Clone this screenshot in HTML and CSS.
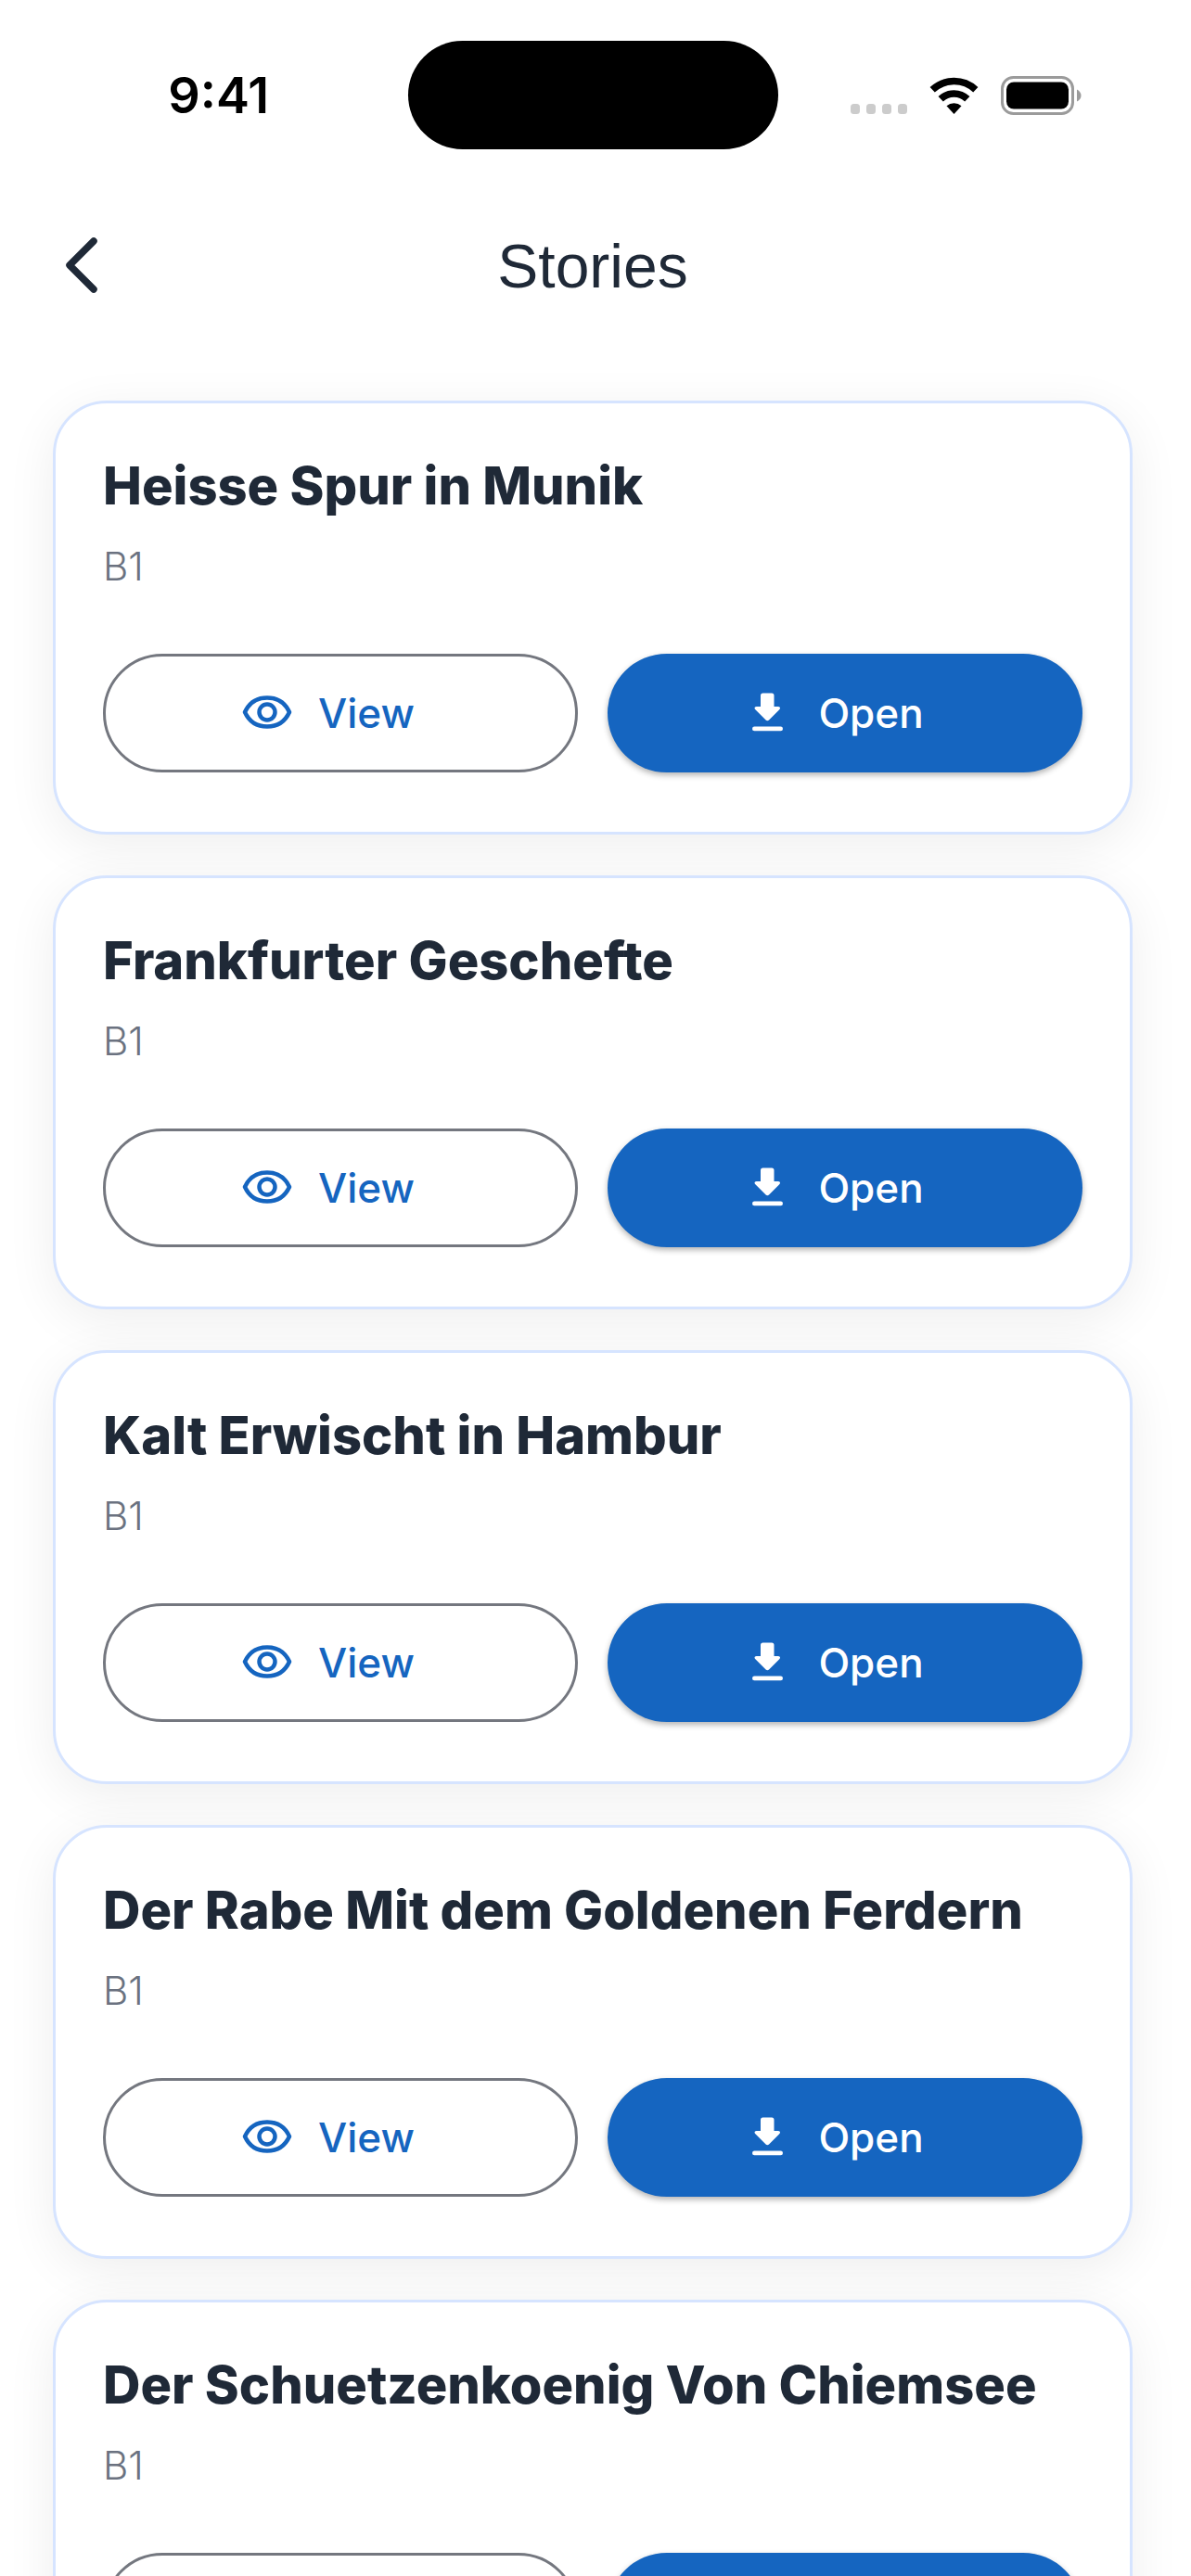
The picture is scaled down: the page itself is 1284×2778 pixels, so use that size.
FILE: index.html
```html
<!DOCTYPE html>
<html lang="en">
<head>
<meta charset="utf-8">
<meta name="viewport" content="width=device-width, initial-scale=1">
<title>Stories</title>
<link rel="stylesheet" href="styles.css">
</head>
<body>
<svg class="sprite" aria-hidden="true">
  <symbol id="eye" viewBox="0 0 54 54">
    <path d="M3 26C8 15 17 10.500 27 10.500S46 15 51 26C46 37 37 41.500 27 41.500S8 37 3 26Z" fill="none" stroke="currentColor" stroke-width="4.500" stroke-linejoin="round"/>
    <circle cx="27" cy="26" r="8.500" fill="none" stroke="currentColor" stroke-width="4.500"/>
  </symbol>
  <symbol id="download" viewBox="0 0 54 54">
    <path d="M22.500 5.500H32Q34.500 5.500 34.500 8V20H39Q42.500 20.500 40 23.500L29 34.500Q27.300 36 25.600 34.500L14.600 23.500Q12 20.500 15.500 20H20V8Q20 5.500 22.500 5.500Z" fill="currentColor"/>
    <rect x="11" y="41.500" width="33" height="4.800" rx="2.400" fill="currentColor"/>
  </symbol>
</svg>
<div class="app">
  <div class="status">
    <div class="status-time">9:41</div>
    <div class="island"></div>
    <div class="status-icons">
      <svg width="61" height="42" viewBox="0 0 61 42" fill="#ccc" aria-hidden="true">
        <rect x="0" y="30" width="10" height="11" rx="3.500"/><rect x="17" y="30" width="10" height="11" rx="3.500"/><rect x="34" y="30" width="10" height="11" rx="3.500"/><rect x="51" y="30" width="10" height="11" rx="3.500"/>
      </svg>
      <svg width="53" height="42" viewBox="1 0 53 42" aria-hidden="true">
        <path d="M4.200 14.800A34 34 0 0 1 50.800 14.800M13.200 24.800A20.500 20.500 0 0 1 41.800 24.800" fill="none" stroke="#000" stroke-width="7.600"/>
        <path d="M27.500 41L19.500 32.300A12 12 0 0 1 35.500 32.300Z"/>
      </svg>
      <svg width="87" height="42" viewBox="0 0 87 42" aria-hidden="true">
        <rect x="1.500" y="1.500" width="76" height="39" rx="12" fill="none" stroke="#9b9b9b" stroke-width="3"/>
        <rect x="6" y="6.500" width="67" height="29" rx="8"/>
        <path d="M82 14.500Q86.500 17 86.500 21T82 27.500Z" fill="#9b9b9b"/>
      </svg>
    </div>
  </div>
  <header class="nav">
    <button class="back" type="button" aria-label="Back">
      <svg width="38" height="62" viewBox="0 0 38 62" aria-hidden="true"><path d="M31 4L5 30L31 56" fill="none" stroke="currentColor" stroke-width="7.500" stroke-linecap="round" stroke-linejoin="round"/></svg>
    </button>
    <h1 class="nav-title">Stories</h1>
  </header>
  <main class="list">
    <article class="card">
      <h2 class="card-title">Heisse Spur in Munik</h2>
      <p class="level">B1</p>
      <div class="actions">
        <button class="btn btn-view" type="button"><svg class="icon"><use href="#eye"/></svg>View</button>
        <button class="btn btn-open" type="button"><svg class="icon"><use href="#download"/></svg>Open</button>
      </div>
    </article>
    <article class="card">
      <h2 class="card-title">Frankfurter Geschefte</h2>
      <p class="level">B1</p>
      <div class="actions">
        <button class="btn btn-view" type="button"><svg class="icon"><use href="#eye"/></svg>View</button>
        <button class="btn btn-open" type="button"><svg class="icon"><use href="#download"/></svg>Open</button>
      </div>
    </article>
    <article class="card">
      <h2 class="card-title">Kalt Erwischt in Hambur</h2>
      <p class="level">B1</p>
      <div class="actions">
        <button class="btn btn-view" type="button"><svg class="icon"><use href="#eye"/></svg>View</button>
        <button class="btn btn-open" type="button"><svg class="icon"><use href="#download"/></svg>Open</button>
      </div>
    </article>
    <article class="card">
      <h2 class="card-title">Der Rabe Mit dem Goldenen Ferdern</h2>
      <p class="level">B1</p>
      <div class="actions">
        <button class="btn btn-view" type="button"><svg class="icon"><use href="#eye"/></svg>View</button>
        <button class="btn btn-open" type="button"><svg class="icon"><use href="#download"/></svg>Open</button>
      </div>
    </article>
    <article class="card">
      <h2 class="card-title">Der Schuetzenkoenig Von Chiemsee</h2>
      <p class="level">B1</p>
      <div class="actions">
        <button class="btn btn-view" type="button"><svg class="icon"><use href="#eye"/></svg>View</button>
        <button class="btn btn-open" type="button"><svg class="icon"><use href="#download"/></svg>Open</button>
      </div>
    </article>
  </main>
</div>
</body>
</html>
```
FILE: styles.css
```css
* {
  box-sizing: border-box;
}

html {
  height: 100%;
  overflow: hidden;
}

body {
  height: 100%;
  margin: 0;
  overflow: hidden auto;
  scrollbar-width: none;
  background: #fff;
  color: #1f2937;
  font-family: Inter, "Liberation Sans", sans-serif;
}

h1, h2, p {
  margin: 0;
}

.sprite {
  display: none;
}

.app {
  padding-right: 6px;
}

.status {
  display: grid;
  grid-template-columns: 1fr 399px 1fr;
  align-items: center;
  padding-top: 44px;
  color: #000;
}

.status-time {
  padding-left: 32px;
  text-align: center;
  font-size: 54px;
  font-weight: 600;
  line-height: 66px;
}

.island {
  height: 117px;
  border-radius: 59px;
  background: #000;
}

.status-icons {
  display: flex;
  justify-content: flex-end;
  gap: 24px;
  padding-right: 112px;
}

.nav {
  display: grid;
  grid-template-columns: 1fr auto 1fr;
  align-items: center;
  padding: 86px 70px;
}

.back {
  display: flex;
  justify-self: start;
  padding: 0;
  border: 0;
  background: none;
  color: inherit;
}

.nav-title {
  font-family: "Liberation Sans", Arial, sans-serif;
  font-size: 66px;
  font-weight: 400;
  line-height: 80px;
}

.list {
  display: flex;
  flex-direction: column;
  gap: 44px;
  padding: 19px 57px 44px;
}

.card {
  padding: 56px 51px 64px;
  border: 3px solid #d6e4ff;
  border-radius: 58px;
  background: #fff;
  box-shadow: 0 12px 54px rgba(0, 0, 0, 0.07);
}

.card-title {
  font-size: 56px;
  font-weight: 800;
  line-height: 66px;
}

.level {
  margin-top: 30px;
  color: #6b7280;
  font-size: 42px;
  font-weight: 300;
  line-height: 48px;
}

.actions {
  display: grid;
  grid-template-columns: 1fr 1fr;
  gap: 32px;
  margin-top: 70px;
}

.btn {
  display: flex;
  align-items: center;
  justify-content: center;
  gap: 28px;
  height: 128px;
  padding: 0 26px 0 0;
  border: 0;
  border-radius: 64px;
  font-family: inherit;
  font-size: 44px;
  font-weight: 500;
}

.btn-view {
  border: 3px solid #74777f;
  background: #fff;
  color: #1565c0;
}

.btn-open {
  background: #1565c0;
  color: #fff;
  box-shadow: 0 3px 6px rgba(0, 0, 0, 0.3);
}

.icon {
  width: 54px;
  height: 54px;
}
```
